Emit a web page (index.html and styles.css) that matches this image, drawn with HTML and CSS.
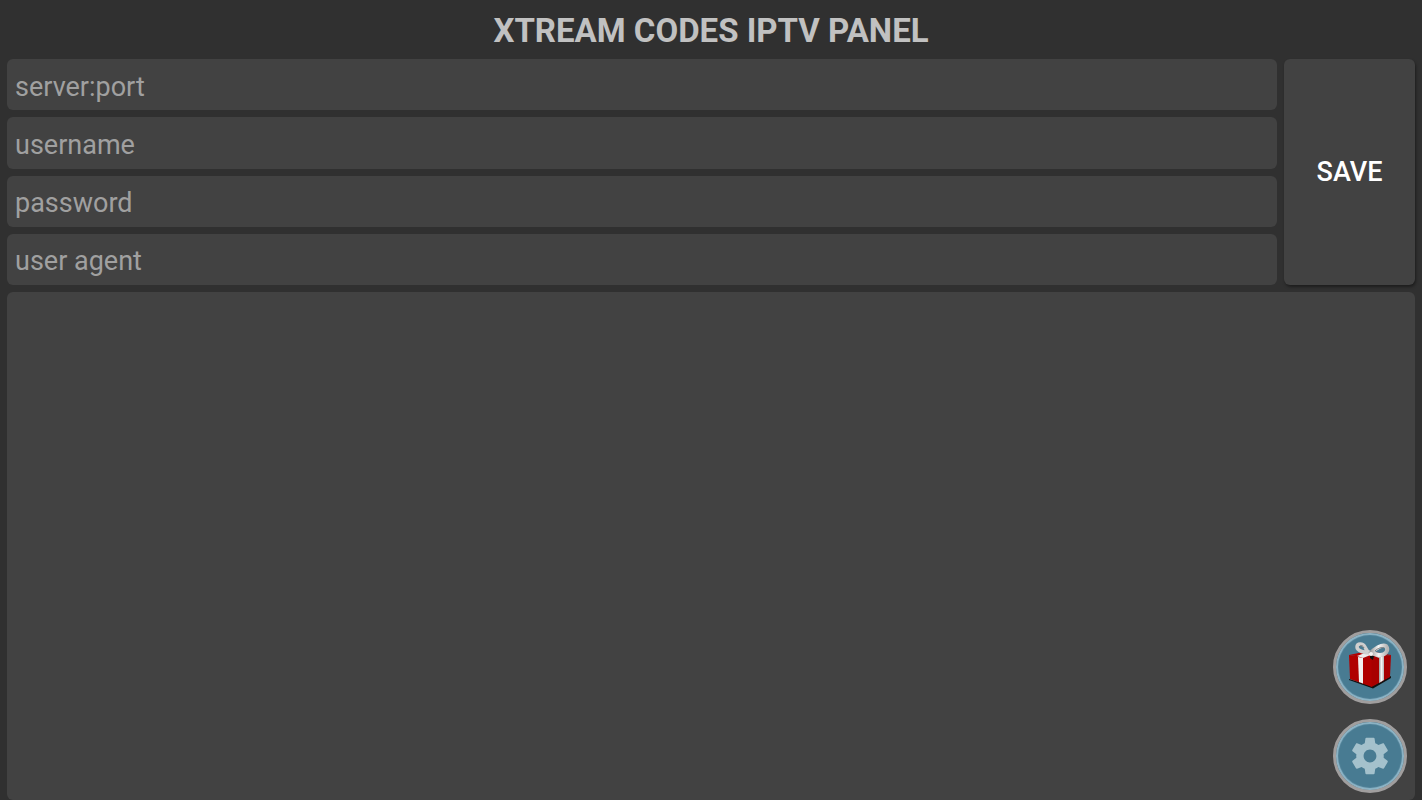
FILE: index.html
```html
<!DOCTYPE html>
<html lang="en">
<head>
  <meta charset="UTF-8">
  <meta name="viewport" content="width=device-width, initial-scale=1.0">
  <title>Xtream Codes IPTV Panel</title>
  <link rel="stylesheet" href="styles.css">
</head>
<body>
  <h1>XTREAM CODES IPTV PANEL</h1>

  <form id="panelForm">
    <div class="fields">
      <input type="text" name="server" placeholder="server:port" aria-label="server:port">
      <input type="text" name="username" placeholder="username" aria-label="username">
      <input type="password" name="password" placeholder="password" aria-label="password">
      <input type="text" name="agent" placeholder="user agent" aria-label="user agent">
    </div>
    <button type="button" class="save">SAVE</button>
  </form>

  <div id="panelList"></div>

  <div class="floating">
    <button type="button" class="round" aria-label="Gift">
      <svg width="50" height="54" viewBox="0 0 50 54">
        <defs>
          <linearGradient id="silver" x1="0" y1="0" x2="1" y2="0">
            <stop offset="0" stop-color="#9a9a9a"/>
            <stop offset="0.5" stop-color="#f4f4f4"/>
            <stop offset="1" stop-color="#b5b5b5"/>
          </linearGradient>
        </defs>
        <!-- shadow under the box -->
        <path d="M4 39 L27 46 L46 36 L46 38 L28 48.500 L4 40Z" fill="#111"/>
        <!-- box -->
        <path d="M4 15 L23 11 L46 15 L27 18.500Z" fill="#b50000"/>
        <path d="M4 15 L27 18 V47 L5 39Z" fill="#b00000"/>
        <path d="M26.500 18 L46 15 L45 37 L26.500 47Z" fill="#a80000"/>
        <!-- ribbon -->
        <path d="M13 17 L18 18 V43.500 L14 42Z" fill="#f2f2f2"/>
        <path d="M34 17 L39 16 V40 L34 43Z" fill="url(#silver)"/>
        <path d="M12 16 L25 11 L28 14 L18 18Z" fill="#ededed"/>
        <path d="M24 11 L39 16 L34 18 L22 13Z" fill="#c9c9c9"/>
        <path d="M25 15 L29 16 L28 20 L25 18Z" fill="#111"/>
        <!-- bow -->
        <path d="M26 13 C20 13 12 11 12 7 C12 3 18 3 20 7 C21 10 23 12 26 13" fill="none" stroke="#cfcfcf" stroke-width="3.500"/>
        <path d="M15 6 C17 5 18 6 19 8" fill="none" stroke="#777"/>
        <path d="M25 14 C29 9 37 4 41 6 C44 10 41 15 35 15 C31 15 29 13 25 13" fill="none" stroke="url(#silver)" stroke-width="4"/>
        <path d="M30 11 C33 8 37 7 39 8" fill="none" stroke="#777"/>
        <circle cx="26" cy="14" r="2" fill="#f4f4f4"/>
      </svg>
    </button>
    <button type="button" class="round" aria-label="Settings">
      <svg width="44" height="44" viewBox="0 0 24 24" fill="#a4c1cc">
        <path d="M19.430 12.980c.04-.32.07-.64.07-.98s-.03-.66-.07-.98l2.110-1.650c.19-.15.24-.42.12-.64l-2-3.460c-.12-.22-.39-.3-.61-.22l-2.490 1c-.52-.4-1.080-.73-1.690-.98l-.38-2.650C14.460 2.180 14.250 2 14 2h-4c-.25 0-.46.18-.49.42l-.38 2.650c-.61.25-1.170.59-1.690.98l-2.490-1c-.23-.09-.49 0-.61.22l-2 3.460c-.13.22-.07.49.12.64l2.110 1.650c-.04.32-.07.65-.07.98s.03.66.07.98l-2.110 1.650c-.19.15-.24.42-.12.64l2 3.460c.12.22.39.3.61.22l2.490-1c.52.4 1.080.73 1.690.98l.38 2.650c.03.24.24.42.49.42h4c.25 0 .46-.18.49-.42l.38-2.650c.61-.25 1.170-.59 1.690-.98l2.490 1c.23.09.49 0 .61-.22l2-3.460c.12-.22.07-.49-.12-.64l-2.110-1.650zM12 15.500c-1.930 0-3.500-1.570-3.500-3.500s1.570-3.500 3.500-3.500 3.500 1.570 3.500 3.500-1.570 3.500-3.500 3.500z"/>
      </svg>
    </button>
  </div>
</body>
</html>
```

FILE: styles.css
```css
* {
  box-sizing: border-box;
}

body {
  display: flex;
  flex-direction: column;
  gap: 7px;
  min-height: 100vh;
  margin: 0;
  padding: 0 7px;
  background-color: #303030;
  font-family: Roboto, sans-serif;
}

h1 {
  margin: 0;
  padding-top: 10px;
  font-size: 33px;
  line-height: 42px;
  font-weight: bold;
  text-align: center;
  color: #c1c1c1;
}

#panelForm {
  display: flex;
  gap: 7px;
}

.fields {
  flex: 1;
  display: grid;
  grid-template-rows: repeat(4, 1fr);
  gap: 7px;
  height: 226px;
}

input {
  width: 100%;
  min-height: 0;
  padding: 4px 8px 0;
  border: none;
  border-radius: 6px;
  background-color: #424242;
  color: #fff;
  font-family: inherit;
  font-size: 27px;
}

input::placeholder {
  color: #a0a0a0;
  opacity: 1;
}

.save {
  width: 131px;
  border: none;
  border-radius: 6px;
  background-color: #424242;
  box-shadow: 1px 2px 3px rgba(0, 0, 0, 0.4);
  color: #fff;
  font-family: inherit;
  font-size: 27px;
  font-weight: 500;
  cursor: pointer;
}

#panelList {
  flex: 1;
  border-radius: 6px;
  background-color: #424242;
}

/* Round buttons over the list */
.floating {
  position: fixed;
  right: 15px;
  bottom: 7px;
  display: flex;
  flex-direction: column;
  gap: 15px;
}

.round {
  display: flex;
  justify-content: center;
  align-items: center;
  width: 74px;
  height: 74px;
  padding: 0;
  border: 3px solid #a09e9e;
  border-radius: 50%;
  background-color: #487b92;
  box-shadow: inset 0 0 1px 2px #8fb6c8;
  cursor: pointer;
}
```
